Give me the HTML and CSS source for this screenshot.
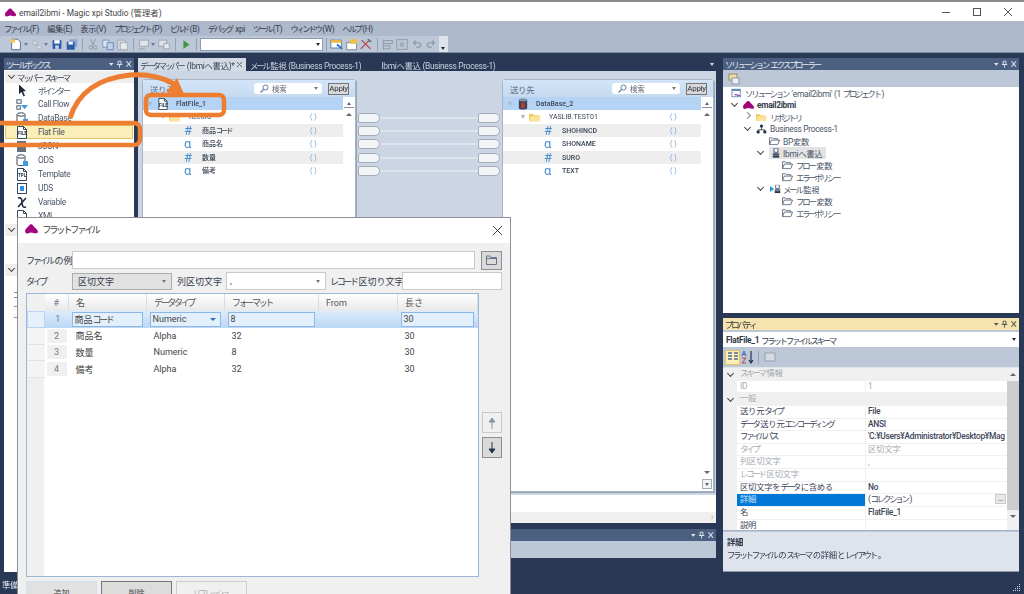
FILE: index.html
```html
<!DOCTYPE html>
<html lang="ja">

<head>
    <meta charset="UTF-8" />
    <title>email2ibmi - Magic xpi Studio</title>
    <link rel="stylesheet" href="styles.css">
</head>

<body>
    <svg class="defs" width="0" height="0">
        <symbol id="logo" viewBox="0 0 14 11">
            <path d="M0 8C0 5 3 4 4.500 1.500C6 -.5 8 .3 9 2C10 4 13 5 14 8C14.500 10.500 11 10.500 8 9.500C5 9 3 11 1.500 10.500C.5 10 0 9 0 8Z" fill="#a3057f" />
        </symbol>
        <symbol id="folder" viewBox="0 0 12 10">
            <path d="M.5 9V1.500H4L5 2.500H9.500V4M.5 9L2.500 4H11.500L9.500 9Z" fill="#fff" stroke="#5d6b7d" />
        </symbol>
        <symbol id="yfolder" viewBox="0 0 14 10">
            <path d="M0 1.500H5L6 3H12V10H0Z" fill="#f0c860" />
            <path d="M2 4H14L12 10H0Z" fill="#fbe39a" />
        </symbol>
        <symbol id="file" viewBox="0 0 12 13">
            <path d="M1.500 .5H7.500L10.500 3.500V12.500H1.500Z" fill="#fff" stroke="#33465e" />
            <path d="M7.500 .5V3.500H10.500" fill="none" stroke="#33465e" />
        </symbol>
        <symbol id="db" viewBox="0 0 12 13">
            <path d="M1 2.500V10.500C1 12 9 12 9 10.500V2.500Z" fill="#fff" stroke="#3c4b5f" />
            <ellipse cx="5" cy="2.500" rx="4" ry="1.700" fill="#fff" stroke="#3c4b5f" />
            <rect x="7" y="7" width="5" height="5" fill="#3d9be0" />
        </symbol>
        <symbol id="target-db" viewBox="0 0 12 13">
            <path d="M1.500 2V11C1.500 13 10.500 13 10.500 11V2Z" fill="#38455a" />
            <ellipse cx="6" cy="2" rx="4.500" ry="1.700" fill="#8793a6" />
            <path d="M4 5H8V11H4Z" fill="#c0392f" />
        </symbol>
        <symbol id="person" viewBox="0 0 10 12">
            <rect x="2.500" y="0" width="5" height="5" fill="#fff" stroke="#26354d" />
            <rect x="1" y="6.500" width="8" height="1.800" fill="#26354d" />
            <rect x="1" y="9" width="8" height="3" fill="#26354d" />
        </symbol>
        <symbol id="pane-btns" viewBox="0 0 26 8">
            <path d="M1 3H6L3.500 6Z" fill="currentColor" />
            <path d="M11 1H14V4.500H11ZM9.500 4.500H15.500M12.500 4.500V8" fill="none" stroke="currentColor" />
            <path d="M20 1L25 7M25 1L20 7" fill="none" stroke="currentColor" stroke-width="1.200" />
        </symbol>
        <symbol id="magnifier" viewBox="0 0 9 9">
            <circle cx="5.500" cy="3.500" r="2.500" fill="none" stroke="#5f7ea8" />
            <path d="M3.500 5.500L.5 8.500" stroke="#5f7ea8" stroke-width="1.300" />
        </symbol>
        <symbol id="to-top" viewBox="0 0 10 8">
            <path d="M0 7.500H10" stroke="#8b95a3" />
            <path d="M3 5L5 2L7 5Z" fill="#5d6672" />
        </symbol>
        <symbol id="to-bottom" viewBox="0 0 10 10">
            <rect x=".5" y=".5" width="9" height="9" fill="#f3f4f6" stroke="#a3adba" />
            <path d="M3 4H7L5 7Z" fill="#5d6672" />
        </symbol>
    </svg>

    <div class="window">
        <header class="titlebar">
            <svg class="logo"><use href="#logo" /></svg>
            <span class="titlebar-text">email2ibmi - Magic xpi Studio (管理者)</span>
            <div class="window-btns">
                <svg width="10" height="10" viewBox="0 0 10 10"><path d="M1 5.500H9" stroke="#555" /></svg>
                <svg width="10" height="10" viewBox="0 0 10 10"><rect x="1.500" y="1.500" width="7" height="7" fill="none" stroke="#555" /></svg>
                <svg width="10" height="10" viewBox="0 0 10 10"><path d="M1 1L9 9M9 1L1 9" stroke="#555" /></svg>
            </div>
        </header>

        <nav class="menubar">
            <span><span class="k">ファイル</span>(F)</span>
            <span>編集(E)</span>
            <span>表示(V)</span>
            <span><span class="k">プロジェクト</span>(P)</span>
            <span><span class="k">ビルド</span>(B)</span>
            <span><span class="k">デバッグ</span> xpi</span>
            <span><span class="k">ツール</span>(T)</span>
            <span><span class="k">ウィンドウ</span>(W)</span>
            <span><span class="k">ヘルプ</span>(H)</span>
        </nav>

        <div class="toolbar-row">
            <div class="toolbar">
                <svg class="tool" viewBox="0 0 16 14"><path d="M3 1H10L13 4V13H3Z" fill="#fff" stroke="#41628c" /><rect x="1" y="1" width="6" height="4" fill="#f0c860" /></svg>
                <i class="caret"></i>
                <svg class="tool" viewBox="0 0 16 14"><path d="M3 3H8V7H3ZM8 8H13V12H8Z" fill="#d5dae2" stroke="#a9b2be" /></svg>
                <i class="caret"></i>
                <svg class="tool" viewBox="0 0 16 14"><rect x="3" y="2" width="10" height="10" fill="#2a5ba8" /><rect x="5" y="2" width="6" height="4" fill="#fff" /><rect x="6" y="8" width="4" height="4" fill="#cbd7ea" /></svg>
                <svg class="tool" viewBox="0 0 16 14"><rect x="5" y="1" width="9" height="9" fill="#8aa5d3" /><rect x="2" y="4" width="9" height="9" fill="#2a5ba8" /><rect x="4" y="4" width="5" height="3" fill="#fff" /></svg>
                <b class="sep"></b>
                <svg class="tool" viewBox="0 0 16 14"><path d="M5 1L9 8M11 1L7 8" stroke="#8d949e" fill="none" /><circle cx="5.500" cy="10.500" r="2" fill="none" stroke="#8d949e" /><circle cx="10.500" cy="10.500" r="2" fill="none" stroke="#8d949e" /></svg>
                <svg class="tool" viewBox="0 0 16 14"><rect x="2" y="2" width="7" height="8" fill="#dbe4f2" stroke="#7b91b3" /><rect x="7" y="5" width="7" height="8" fill="#bed0ea" stroke="#6584b3" /></svg>
                <svg class="tool" viewBox="0 0 16 14"><rect x="3" y="2" width="9" height="11" fill="#d5d9df" stroke="#a0a7b1" /><rect x="6" y="5" width="8" height="8" fill="#e8eaee" stroke="#a0a7b1" /></svg>
                <b class="sep"></b>
                <svg class="tool" viewBox="0 0 16 14"><rect x="3" y="2" width="10" height="7" fill="#dfe3e9" stroke="#9aa2ae" /><path d="M2 12H9" stroke="#9aa2ae" /></svg>
                <i class="caret"></i>
                <svg class="tool" viewBox="0 0 16 14"><rect x="2" y="2" width="9" height="7" fill="#dfe3e9" stroke="#9aa2ae" /><rect x="8" y="6" width="6" height="6" fill="#e9ebef" stroke="#9aa2ae" /></svg>
                <b class="sep"></b>
                <svg class="tool" viewBox="0 0 16 14"><path d="M5 2L12 7L5 12Z" fill="#3e9a3e" /></svg>
                <b class="sep"></b>
                <div class="tool-combo"><i class="caret dark"></i></div>
                <b class="sep"></b>
                <svg class="tool" viewBox="0 0 16 14"><rect x="1" y="2" width="12" height="9" fill="#fff" stroke="#4f77ab" /><rect x="1" y="2" width="12" height="3" fill="#f0b840" /><path d="M8 7L14 12" stroke="#2f6fc0" stroke-width="2" /></svg>
                <svg class="tool" viewBox="0 0 16 14"><rect x="2" y="5" width="11" height="8" fill="#fff" stroke="#7b7f87" /><rect x="6" y="1" width="8" height="5" fill="#f0c040" /></svg>
                <svg class="tool" viewBox="0 0 16 14"><path d="M2 12L12 2M3 2L13 12" stroke="#b9474a" stroke-width="1.500" /><path d="M10 1L14 4" stroke="#6d7685" stroke-width="2" /></svg>
                <b class="sep"></b>
                <svg class="tool" viewBox="0 0 16 14"><path d="M2.500 1V13M2.500 2.500H13V6H2.500M2.500 8.500H10V12H2.500" fill="none" stroke="#8a95a5" /></svg>
                <svg class="tool" viewBox="0 0 16 14"><rect x="2" y="1.500" width="12" height="11" fill="none" stroke="#8a95a5" /><circle cx="8" cy="7" r="3" fill="#a3adba" /></svg>
                <svg class="tool" viewBox="0 0 16 14"><path d="M4 5H10C13 5 13 10 10 10H7M4 5L6.500 2.500M4 5L6.500 7.500" fill="none" stroke="#8a95a5" stroke-width="1.300" /></svg>
                <svg class="tool" viewBox="0 0 16 14"><path d="M12 5H6C3 5 3 10 6 10H9M12 5L9.500 2.500M12 5L9.500 7.500" fill="none" stroke="#8a95a5" stroke-width="1.300" /></svg>
                <div class="overflow-btn"><i class="caret dark"></i></div>
            </div>
        </div>

        <main class="workspace">
            <section class="toolwindow toolbox">
                <div class="tw-head"><span class="k">ツールボックス</span><svg class="tw-btns"><use href="#pane-btns" /></svg></div>
                <div class="toolbox-group"><i class="chev"></i><span class="k">マッパー スキーマ</span></div>
                <ul class="toolbox-list">
                    <li><svg viewBox="0 0 12 13"><path d="M3 .5L3 10L5.500 8L7.500 12.500L9 11.500L7 7.500L10 7Z" fill="#1e2a3a" /></svg><span class="k">ポインター</span></li>
                    <li><svg viewBox="0 0 14 13"><rect x="1" y="1" width="5" height="4" fill="#fff" stroke="#33465e" /><rect x="1" y="8" width="4" height="4" fill="#fff" stroke="#33465e" /><path d="M6 7H14L10 12Z" fill="#3d9be0" /></svg>Call Flow</li>
                    <li><svg><use href="#db" /></svg>DataBase</li>
                    <li class="active"><svg><use href="#file" /></svg><em class="file-tag">FILE</em>Flat File</li>
                    <li><svg viewBox="0 0 12 13"><rect x="1" y="1" width="9" height="11" fill="#666f7c" /></svg>JSON</li>
                    <li><svg><use href="#db" /></svg>ODS</li>
                    <li><svg><use href="#file" /></svg><em class="file-tag">TPL</em>Template</li>
                    <li><svg viewBox="0 0 12 13"><rect x="1.500" y="1.500" width="9" height="10" fill="#fff" stroke="#33465e" /><rect x="4" y="4" width="4" height="5" fill="#2f8fe0" /></svg>UDS</li>
                    <li><svg viewBox="0 0 12 13"><path d="M2 2C5 1 6 3 6 6C6 10 7 12 10 11M10 2L2 11" fill="none" stroke="#1e2a3a" stroke-width="1.500" /></svg>Variable</li>
                    <li><svg><use href="#file" /></svg>XML</li>
                </ul>
                <div class="toolbox-group"><i class="chev"></i></div>
                <div class="toolbox-gap"></div>
                <div class="toolbox-group"><i class="chev"></i></div>
                <div class="toolbox-stub">コ<br>−<br>−</div>
            </section>

            <div class="center">
                <div class="tabstrip">
                    <div class="tab active"><span><span class="k">データマッパー</span> (Ibmiへ書込)*</span><svg class="tab-close" width="7" height="7" viewBox="0 0 7 7"><path d="M1 1L6 6M6 1L1 6" stroke="#566" /></svg></div>
                    <div class="tab"><span class="k">メール</span>監視 (Business Process-1)</div>
                    <div class="tab">Ibmiへ書込 (Business Process-1)</div>
                    <i class="caret light"></i>
                </div>
                <div class="mapper">
                    <div class="schema">
                        <div class="schema-head">
                            <span>送り元</span>
                            <div class="search"><svg width="9" height="9"><use href="#magnifier" /></svg>検索<i class="caret gray"></i></div>
                            <div class="apply">Apply</div>
                        </div>
                        <div class="schema-body">
                            <div class="rows">
                                <div class="row selected"><i class="tri"></i><svg class="lv0"><use href="#file" /></svg><em class="file-tag">FILE</em><span class="name">FlatFile_1</span></div>
                                <div class="row"><i class="tri sub"></i><svg class="lv1"><use href="#yfolder" /></svg><span class="name">Record</span><span class="count">( )</span></div>
                                <div class="row odd"><span class="type">#</span><span class="name">商品<span class="k">コード</span></span><span class="count">( )</span></div>
                                <div class="row"><span class="type">α</span><span class="name">商品名</span><span class="count">( )</span></div>
                                <div class="row odd"><span class="type">#</span><span class="name">数量</span><span class="count">( )</span></div>
                                <div class="row"><span class="type">α</span><span class="name">備考</span><span class="count">( )</span></div>
                            </div>
                            <div class="schema-scroll"><svg width="10" height="8"><use href="#to-top" /></svg><i class="up"></i><i class="down"></i><svg width="10" height="10"><use href="#to-bottom" /></svg></div>
                        </div>
                    </div>
                    <div class="links">
                        <div class="link"><i class="pill"></i><b></b><i class="pill"></i></div>
                        <div class="link"><i class="pill"></i><b></b><i class="pill"></i></div>
                        <div class="link"><i class="pill"></i><b></b><i class="pill"></i></div>
                        <div class="link"><i class="pill"></i><b></b><i class="pill"></i></div>
                        <div class="link"><i class="pill"></i><b></b><i class="pill"></i></div>
                    </div>
                    <div class="schema">
                        <div class="schema-head">
                            <span>送り先</span>
                            <div class="search"><svg width="9" height="9"><use href="#magnifier" /></svg>検索<i class="caret gray"></i></div>
                            <div class="apply">Apply</div>
                        </div>
                        <div class="schema-body">
                            <div class="rows">
                                <div class="row selected"><i class="tri"></i><svg class="lv0"><use href="#target-db" /></svg><span class="name">DataBase_2</span></div>
                                <div class="row"><i class="tri sub"></i><svg class="lv1"><use href="#yfolder" /></svg><span class="name">YASLIB.TEST01</span><span class="count">( )</span></div>
                                <div class="row odd"><span class="type">#</span><span class="name">SHOHINCD</span><span class="count">( )</span></div>
                                <div class="row"><span class="type">α</span><span class="name">SHONAME</span><span class="count">( )</span></div>
                                <div class="row odd"><span class="type">#</span><span class="name">SURO</span><span class="count">( )</span></div>
                                <div class="row"><span class="type">α</span><span class="name">TEXT</span><span class="count">( )</span></div>
                            </div>
                            <div class="schema-scroll"><svg width="10" height="8"><use href="#to-top" /></svg><i class="up"></i><i class="down"></i><svg width="10" height="10"><use href="#to-bottom" /></svg></div>
                        </div>
                    </div>
                </div>
                <div class="center-white"></div>
                <div class="center-hscroll">›</div>
                <div class="output-panel">
                    <div class="tw-head"><span></span><svg class="tw-btns"><use href="#pane-btns" /></svg></div>
                    <div class="output-bar"></div>
                </div>
            </div>

            <div class="right">
                <section class="toolwindow explorer">
                    <div class="tw-head"><span class="k">ソリューション エクスプローラー</span><svg class="tw-btns"><use href="#pane-btns" /></svg></div>
                    <div class="explorer-bar"><svg width="12" height="12" viewBox="0 0 12 12"><rect x="1" y="1" width="8" height="6" fill="#f3dc9c" stroke="#9a8d68" /><rect x="4" y="5" width="7" height="6" fill="#eef1f6" stroke="#8a95a5" /></svg></div>
                    <ul class="tree">
                        <li class="lv-a"><svg viewBox="0 0 12 12"><rect x=".5" y="1.500" width="10" height="9" fill="#fff" stroke="#5a7fb0" /><rect x=".5" y="1.500" width="10" height="2" fill="#5a7fb0" /><path d="M4 8.500C6 6 8 11 10 8.500" fill="none" stroke="#7a3fb0" stroke-width="1.500" /></svg><span><span class="k">ソリューション</span> 'email2ibmi' (1 <span class="k">プロジェクト</span>)</span></li>
                        <li class="lv-b bold"><i class="chev"></i><svg viewBox="0 0 14 11"><use href="#logo" /></svg>email2ibmi</li>
                        <li class="lv-c"><i class="chev closed"></i><svg viewBox="0 0 14 10"><use href="#yfolder" /></svg><span class="k">リポジトリ</span></li>
                        <li class="lv-c"><i class="chev"></i><svg viewBox="0 0 12 12"><circle cx="6" cy="2.500" r="2" fill="#26354d" /><circle cx="2" cy="9.500" r="2" fill="#26354d" /><circle cx="10" cy="9.500" r="2" fill="#26354d" /><path d="M6 3V7M2 9V7H10V9" fill="none" stroke="#26354d" /></svg>Business Process-1</li>
                        <li class="lv-d"><svg viewBox="0 0 12 10"><use href="#folder" /></svg>BP変数</li>
                        <li class="lv-c2"><i class="chev"></i><span class="current"><svg viewBox="0 0 10 12"><use href="#person" /></svg>Ibmiへ書込</span></li>
                        <li class="lv-e"><svg viewBox="0 0 12 10"><use href="#folder" /></svg><span><span class="k">フロー</span>変数</span></li>
                        <li class="lv-e"><svg viewBox="0 0 12 10"><use href="#folder" /></svg><span class="k">エラーポリシー</span></li>
                        <li class="lv-c2"><i class="chev"></i><span class="mail"><i class="play"></i><svg viewBox="0 0 10 12"><use href="#person" /></svg><span><span class="k">メール</span>監視</span></span></li>
                        <li class="lv-e"><svg viewBox="0 0 12 10"><use href="#folder" /></svg><span><span class="k">フロー</span>変数</span></li>
                        <li class="lv-e"><svg viewBox="0 0 12 10"><use href="#folder" /></svg><span class="k">エラーポリシー</span></li>
                    </ul>
                </section>

                <section class="toolwindow props">
                    <div class="tw-head focus"><span class="k">プロパティ</span><svg class="tw-btns"><use href="#pane-btns" /></svg></div>
                    <div class="props-combo"><b>FlatFile_1</b>&nbsp;<span class="k">フラットファイルスキーマ</span><i class="caret dark"></i></div>
                    <div class="props-bar">
                        <span class="props-btn on"><svg width="12" height="12" viewBox="0 0 12 12"><path d="M1 2H5M1 5H5M1 8H5M7 2H11M7 5H11M7 8H11" stroke="#516c96" stroke-width="1.500" /></svg></span>
                        <span class="props-btn"><svg width="14" height="14" viewBox="0 0 14 14"><path d="M1 6L3 1L5 6M1.500 4.500H4.500" fill="none" stroke="#3f6fb5" /><path d="M1 8H5L1 13H5" fill="none" stroke="#b9474a" /><path d="M10 1V12M8 10L10 13L12 10" fill="none" stroke="#26354d" stroke-width="1.200" /></svg></span>
                        <b class="sep"></b>
                        <span class="props-btn"><svg width="12" height="12" viewBox="0 0 12 12"><rect x="1" y="2" width="10" height="8" fill="#d5dae2" stroke="#98a2b0" /></svg></span>
                    </div>
                    <div class="props-grid">
                        <div class="props-table">
                            <div class="p-row cat"><i class="chev"></i><span class="p-name"><span class="k">スキーマ</span>情報</span></div>
                            <div class="p-row dim"><span class="p-name">ID</span><span class="p-val">1</span></div>
                            <div class="p-row cat"><i class="chev"></i><span class="p-name">一般</span></div>
                            <div class="p-row"><span class="p-name">送り元<span class="k">タイプ</span></span><span class="p-val strong">File</span></div>
                            <div class="p-row"><span class="p-name"><span class="k">データ</span>送り元<span class="k">エンコーディング</span></span><span class="p-val strong">ANSI</span></div>
                            <div class="p-row"><span class="p-name"><span class="k">ファイルパス</span></span><span class="p-val strong">'C:¥Users¥Administrator¥Desktop¥Mag</span></div>
                            <div class="p-row dim"><span class="p-name"><span class="k">タイプ</span></span><span class="p-val">区切文字</span></div>
                            <div class="p-row dim"><span class="p-name">列区切文字</span><span class="p-val">,</span></div>
                            <div class="p-row dim"><span class="p-name"><span class="k">レコード</span>区切文字</span><span class="p-val"></span></div>
                            <div class="p-row"><span class="p-name">区切文字を<span class="k">データ</span>に含める</span><span class="p-val strong">No</span></div>
                            <div class="p-row picked"><span class="p-name">詳細</span><span class="p-val"><span>(<span class="k">コレクション</span>)</span><i class="dots">...</i></span></div>
                            <div class="p-row"><span class="p-name">名</span><span class="p-val strong">FlatFile_1</span></div>
                            <div class="p-row"><span class="p-name">説明</span><span class="p-val"></span></div>
                        </div>
                        <div class="props-scroll"><i class="up"></i><div class="props-thumb"></div><i class="down"></i></div>
                    </div>
                    <div class="props-desc"><b>詳細</b><span><span class="k">フラットファイル</span>の<span class="k">スキーマ</span>の詳細と<span class="k">レイアウト</span>。</span></div>
                </section>
            </div>
        </main>

        <footer class="statusbar">
            <span>準備</span>
            <svg class="grip" width="9" height="9" viewBox="0 0 9 9"><path d="M7 1h1v1H7zM5 3h1v1H5zM7 3h1v1H7zM3 5h1v1H3zM5 5h1v1H5zM7 5h1v1H7zM1 7h1v1H1zM3 7h1v1H3zM5 7h1v1H5zM7 7h1v1H7z" fill="#cfd6e2" /></svg>
        </footer>
    </div>

    <div class="dialog">
        <div class="dlg-title">
            <svg class="dlg-logo"><use href="#logo" /></svg>
            <span class="k">フラットファイル</span>
            <svg class="dlg-close" width="11" height="11" viewBox="0 0 11 11"><path d="M1 1L10 10M10 1L1 10" stroke="#444" /></svg>
        </div>
        <div class="dlg-body">
            <div class="field-row">
                <label class="file-label"><span class="k">ファイル</span>の例</label>
                <div class="input grow"></div>
                <div class="folder-btn"><svg width="11" height="10" viewBox="0 0 11 10"><path d="M.5 9.500V1H4L5 2.500H10.500V9.500Z" fill="none" stroke="#66758a" /><path d="M.5 3.500H10.500" stroke="#66758a" /></svg></div>
            </div>
            <div class="field-row">
                <label class="file-label"><span class="k">タイプ</span></label>
                <div class="select">区切文字<i class="caret gray"></i></div>
                <label class="sep-label">列区切文字</label>
                <div class="input col-sep">,<i class="caret gray"></i></div>
                <label class="rec-label"><span class="k">レコード</span>区切り文字</label>
                <div class="input rec-sep"></div>
            </div>
            <div class="grid-row">
                <div class="table-wrap">
                    <table class="fields">
                        <colgroup>
                            <col class="c-gutter"><col class="c-no"><col class="c-name"><col class="c-type"><col class="c-format"><col class="c-from"><col class="c-len">
                        </colgroup>
                        <thead>
                            <tr><th class="corner"></th><th class="no">#</th><th>名</th><th><span class="k">データタイプ</span></th><th><span class="k">フォーマット</span></th><th>From</th><th>長さ</th></tr>
                        </thead>
                        <tbody>
                            <tr class="current-row">
                                <td class="gutter"></td><td class="no">1</td>
                                <td><span class="edit"><span>商品<span class="k">コード</span></span></span></td>
                                <td><span class="edit">Numeric<i class="blue-caret"></i></span></td>
                                <td><span class="edit">8</span></td>
                                <td></td>
                                <td><span class="edit">30</span></td>
                            </tr>
                            <tr><td class="gutter"></td><td class="no"><span>2</span></td><td>商品名</td><td>Alpha</td><td>32</td><td></td><td>30</td></tr>
                            <tr><td class="gutter"></td><td class="no"><span>3</span></td><td>数量</td><td>Numeric</td><td>8</td><td></td><td>30</td></tr>
                            <tr><td class="gutter"></td><td class="no"><span>4</span></td><td>備考</td><td>Alpha</td><td>32</td><td></td><td>30</td></tr>
                        </tbody>
                    </table>
                </div>
                <div class="move-btns">
                    <div class="move off"><svg width="12" height="14" viewBox="0 0 12 14"><path d="M6 13V3M3 6L6 2L9 6Z" fill="#8a95a5" stroke="#8a95a5" /></svg></div>
                    <div class="move"><svg width="12" height="14" viewBox="0 0 12 14"><path d="M6 1V11M3 8L6 12L9 8Z" fill="#26354d" stroke="#26354d" /></svg></div>
                </div>
            </div>
            <div class="dlg-buttons">
                <button class="btn primary">追加</button>
                <button class="btn pressed">削除</button>
                <button class="btn off"><span class="k">リフレッシュ</span></button>
            </div>
        </div>
    </div>

    <svg class="callout" width="240" height="160" viewBox="0 0 240 160">
        <rect x="-6" y="123" width="146" height="22" rx="6" fill="none" stroke="#ed7d31" stroke-width="4.500" />
        <rect x="146" y="95" width="78" height="20" rx="5" fill="none" stroke="#ed7d31" stroke-width="4.500" />
        <path d="M70 118C78 92 100 78 130 75C148 74 162 77 174 84" fill="none" stroke="#ed7d31" stroke-width="5" />
        <path d="M177 78L184 94L166 92Z" fill="#ed7d31" />
    </svg>
</body>

</html>
```

FILE: styles.css
```css
* {
    box-sizing: border-box;
}

html,
body {
    margin: 0;
    width: 1024px;
    height: 594px;
    overflow: hidden;
}

body {
    position: relative;
    background: #293955;
    font-family: Roboto, "Noto Sans CJK JP", sans-serif;
    font-size: 8.400px;
    letter-spacing: -0.3px;
    color: #333c4c;
    filter: blur(0.45px);
}

ul {
    list-style: none;
    margin: 0;
    padding: 0;
}

.defs {
    position: absolute;
}

/* カナは幅の狭いフォントに見せる */
.k {
    letter-spacing: -0.26em;
    word-spacing: 0.3em;
    padding-right: 0.2em;
}

.window {
    display: flex;
    flex-direction: column;
    height: 594px;
}

.titlebar {
    display: flex;
    align-items: center;
    flex: none;
    height: 21px;
    padding: 1px 0 0 5px;
    background: #fff;
    border-top: 2px solid #8a8d92;
    font-size: 8.400px;
    letter-spacing: 0;
    color: #444;
}

.logo {
    width: 11px;
    height: 9px;
    margin-right: 3px;
}

.titlebar-text {
    flex: 1;
}

.window-btns {
    display: flex;
    gap: 21px;
    padding-right: 11px;
}

.menubar {
    display: flex;
    align-items: center;
    flex: none;
    gap: 8px;
    height: 14px;
    padding: 0 0 1px 4px;
    background: #aeb9cc;
    font-size: 8.200px;
}

.toolbar-row {
    flex: none;
    height: 18px;
    padding-top: 1px;
    background: #aeb9cc;
    border-bottom: 1px solid #7a8aa3;
}

.toolbar {
    display: inline-flex;
    align-items: center;
    width: 446px;
    height: 16px;
    padding-left: 9px;
    background: #bcc7d8;
    border-radius: 2px;
}

.tool {
    flex: none;
    width: 14px;
    height: 13px;
    margin-right: 0.5px;
}

.caret {
    display: inline-block;
    flex: none;
    width: 0;
    height: 0;
    margin: 0 2px 0 0;
    border: 2px solid transparent;
    border-top: 3px solid #6b7a92;
    border-bottom: 0;
}

.caret.dark {
    border-top-color: #1e2a3a;
}

.caret.gray {
    border-top-color: #777;
}

.caret.light {
    border-top-color: #d9e0eb;
}

.sep {
    display: inline-block;
    flex: none;
    width: 1px;
    height: 13px;
    margin: 0 3px;
    background: #93a1b6;
}

.tool-combo {
    display: flex;
    align-items: center;
    justify-content: flex-end;
    flex: none;
    width: 123px;
    height: 13px;
    background: #fff;
    border: 1px solid #8d9cb2;
}

.overflow-btn {
    display: flex;
    align-items: flex-end;
    justify-content: center;
    flex: none;
    width: 9px;
    height: 16px;
    padding-bottom: 2px;
    background: #dfe4ec;
}

.overflow-btn .caret {
    margin: 0;
}

.workspace {
    flex: 1;
    display: flex;
    padding: 5px 4px 0;
    min-height: 0;
}

.toolwindow {
    display: flex;
    flex-direction: column;
}

.tw-head {
    display: flex;
    justify-content: space-between;
    align-items: center;
    flex: none;
    height: 12px;
    padding: 0 2px 0 2px;
    background: #4b5f80;
    color: #e4e9f1;
    white-space: nowrap;
}

.tw-btns {
    width: 24px;
    height: 8px;
    color: #dfe5ee;
}

.tw-head.focus {
    background: #f5e4ae;
    color: #333;
}

.tw-head.focus .tw-btns {
    color: #555;
}

.toolbox {
    width: 130px;
    height: 514px;
    background: #fff;
}

.chev {
    display: inline-block;
    flex: none;
    width: 10px;
    height: 8px;
    position: relative;
}

.chev::before {
    content: "";
    position: absolute;
    left: 2px;
    top: 0;
    width: 4px;
    height: 4px;
    border-right: 1px solid #444;
    border-bottom: 1px solid #444;
    transform: rotate(45deg);
}

.chev.closed::before {
    transform: rotate(-45deg);
    border-color: #888;
}

.toolbox-group {
    display: flex;
    align-items: center;
    flex: none;
    height: 12px;
    margin: 1px 0 0 1px;
    padding-left: 2px;
    background: #eee;
}

.toolbox-list li {
    display: flex;
    align-items: center;
    position: relative;
    height: 14px;
    padding-left: 34px;
    color: #4b5668;
}

.toolbox-list li svg {
    position: absolute;
    left: 12px;
    top: 1px;
    width: 12px;
    height: 13px;
}

.toolbox-list .active {
    margin: 0 1px;
    padding-left: 33px;
    background: #fbeeb8;
    box-shadow: inset 0 0 0 1px #e5c365;
}

.toolbox-list .active svg {
    left: 11px;
}

.file-tag {
    position: absolute;
    left: 14px;
    top: 6px;
    font-size: 4.500px;
    font-style: normal;
    font-weight: 700;
    letter-spacing: 0;
    color: #26354d;
}

.toolbox-list .active .file-tag {
    left: 13px;
}

.toolbox-gap {
    height: 27px;
    flex: none;
}

.toolbox-stub {
    margin: 14px 0 0 9px;
    line-height: 11px;
    color: #555;
}

.center {
    display: flex;
    flex-direction: column;
    width: 578px;
    margin-left: 4px;
}

.tabstrip {
    display: flex;
    align-items: center;
    height: 13px;
    flex: none;
    color: #c7d0df;
}

.tab {
    padding: 0 0 0 2px;
    white-space: nowrap;
}

.tab.active {
    display: flex;
    align-items: center;
    justify-content: space-between;
    width: 108px;
    height: 13px;
    margin-right: 2px;
    padding-right: 3px;
    background: #d3dae6;
    color: #3c4658;
}

.tabstrip .tab:nth-child(3) {
    margin-left: 18px;
}

.tabstrip .caret {
    margin: 0 2px 0 auto;
}

.mapper {
    display: flex;
    align-items: stretch;
    flex: none;
    height: 424px;
    padding: 8px 2px 3px 4px;
    background: #ccd5e3;
}

.schema {
    display: flex;
    flex-direction: column;
    width: 214px;
    background: #fff;
    border: 1px solid #a6b4c8;
    border-radius: 3px 3px 0 0;
    box-shadow: 1px 1px 0 #9ba3ae;
}

.schema:last-child {
    width: 212px;
}

.schema-head {
    display: flex;
    align-items: center;
    flex: none;
    height: 17px;
    padding: 0 6px 0 7px;
    background: linear-gradient(#d3e5f8, #c5d9f0);
    color: #5b6a80;
}

.schema-head > span {
    flex: 1;
}

.search {
    display: flex;
    align-items: center;
    gap: 3px;
    width: 68px;
    height: 11px;
    margin-right: 6px;
    padding: 0 2px 0 6px;
    background: #fff;
    border-radius: 3px;
    color: #667;
    font-size: 7.500px;
}

.search .caret {
    margin-left: auto;
}

.apply {
    width: 21px;
    height: 12px;
    line-height: 10px;
    text-align: center;
    background: #d6d8dc;
    border: 1px solid #777;
    color: #333;
    font-size: 8px;
}

.schema-body {
    display: flex;
    flex: 1;
}

.rows {
    flex: 1;
}

.schema-scroll {
    display: flex;
    flex-direction: column;
    align-items: center;
    width: 12px;
    padding: 3px 0 2px;
}

.schema-scroll .down {
    margin-top: auto;
}

.row {
    position: relative;
    height: 13.400px;
    line-height: 14px;
    font-size: 7px;
    font-weight: 500;
    letter-spacing: 0;
    color: #3c4658;
}

.row.selected {
    background: #b5d4f5;
}

.row.odd {
    background: #eee;
}

.row svg {
    position: absolute;
    height: 12px;
    width: 12px;
    top: 1px;
}

.row .lv0 {
    left: 14px;
}

.row .lv1 {
    left: 26px;
}

.tri {
    position: absolute;
    left: 5px;
    top: 5px;
    width: 0;
    height: 0;
    border: 2.500px solid transparent;
    border-top: 4px solid #a9b4c4;
    border-bottom: 0;
}

.tri.sub {
    left: 18px;
}

.row .file-tag {
    left: 16px;
    top: 6px;
    line-height: 6px;
}

.row .name {
    position: absolute;
    left: 59px;
    white-space: nowrap;
}

.row.selected .name {
    left: 33px;
}

.row .lv1 + .name {
    left: 46px;
    font-weight: 400;
}

.row .type {
    position: absolute;
    left: 41px;
    font-size: 13px;
    font-weight: 400;
    color: #4a8fd0;
    line-height: 13px;
}

.row .count {
    position: absolute;
    left: 167px;
    color: #6c9bd0;
    font-weight: 400;
}

.links {
    display: flex;
    flex-direction: column;
    flex: 1;
    padding-top: 32px;
}

.link {
    display: flex;
    align-items: center;
    flex: none;
    height: 13.400px;
    padding: 0 2px;
}

.link b {
    flex: 1;
    height: 2px;
    background: #dfe4ec;
}

.pill {
    display: block;
    width: 22px;
    height: 10px;
    background: #f3f4f6;
    border: 1px solid #a3adba;
    border-radius: 2px 5px 5px 2px;
}

.center-white {
    height: 17px;
    flex: none;
    background: #fff;
}

.center-hscroll {
    height: 11px;
    flex: none;
    padding-right: 3px;
    line-height: 10px;
    text-align: right;
    background: #f0f0f0;
    color: #aaa;
}

.output-panel {
    margin-top: 6px;
    flex: none;
}

.output-bar {
    height: 17px;
    background: #bcc7d8;
}

.right {
    display: flex;
    flex-direction: column;
    width: 296px;
    margin-left: 7px;
}

.explorer {
    height: 255px;
    background: #fff;
}

.explorer-bar {
    flex: none;
    height: 17px;
    padding: 3px 0 0 5px;
    background: #bcc7d8;
}

.tree li {
    display: flex;
    align-items: center;
    height: 12px;
    color: #4b5668;
    white-space: nowrap;
}

.tree svg {
    flex: none;
    width: 11px;
    height: 10px;
    margin-right: 3px;
}

.tree .chev {
    width: 13px;
}

.tree .bold {
    font-weight: 700;
    color: #333c4c;
}

.lv-a {
    padding-left: 8px;
}

.lv-b {
    padding-left: 7px;
}

.lv-c {
    padding-left: 20px;
}

.lv-c2 {
    padding-left: 33px;
}

.lv-d {
    padding-left: 46px;
}

.lv-e {
    padding-left: 59px;
}

.current {
    display: flex;
    align-items: center;
    height: 12px;
    padding: 0 4px 0 3px;
    background: #e3e3e3;
}

.mail {
    display: flex;
    align-items: center;
    padding-left: 1px;
}

.tree .current svg {
    width: 8px;
}

.tree .mail svg {
    width: 7px;
    margin-right: 2px;
}

.play {
    flex: none;
    width: 0;
    height: 0;
    border: 3px solid transparent;
    border-left: 4px solid #1a9ae0;
    border-right: 0;
}

.props {
    height: 254px;
    margin-top: 5px;
    background: #bcc7d8;
}

.props-combo {
    display: flex;
    align-items: center;
    flex: none;
    height: 15px;
    margin-top: 2px;
    padding-left: 3px;
    background: #fff;
}

.props-combo .caret {
    margin: 0 3px 0 auto;
}

.props-bar {
    display: flex;
    align-items: center;
    flex: none;
    height: 20px;
    padding-left: 2px;
    background: #bcc7d8;
}

.props-btn {
    display: flex;
    align-items: center;
    justify-content: center;
    width: 15px;
    height: 15px;
}

.props-btn.on {
    background: #fbeeb8;
    border: 1px solid #e5c365;
}

.props-grid {
    display: flex;
    flex: none;
    height: 164px;
    overflow: hidden;
    background: #fff;
    border-top: 1px solid #e2e5ea;
    border-bottom: 1px solid #a8b2c2;
}

.props-table {
    width: 284px;
    flex: none;
}

.p-row {
    display: flex;
    align-items: center;
    position: relative;
    height: 12.650px;
    padding-left: 14px;
    background: #fff;
    border-bottom: 1px solid #f0f0f0;
    color: #3c4658;
    white-space: nowrap;
    box-shadow: inset 14px 0 #f0f0f0;
}

.p-name {
    width: 129px;
    height: 100%;
    line-height: 11.500px;
    padding-left: 3px;
    flex: none;
    border-right: 1px solid #f0f0f0;
}

.p-val {
    flex: 1;
    min-width: 0;
    display: flex;
    justify-content: space-between;
    padding-left: 2px;
    overflow: hidden;
    line-height: 11.500px;
}

.strong {
    font-weight: 500;
}

.p-row.dim {
    color: #a4a9b1;
}

.p-row.cat {
    background: #f0f0f0;
    color: #a4a9b1;
}

.p-row.cat .chev {
    position: absolute;
    left: 3px;
    top: 3px;
}

.p-row.cat .p-name {
    border-right: 0;
}

.p-row.picked .p-name {
    background: #0078d7;
    color: #cfe3f7;
}

.dots {
    flex: none;
    width: 11px;
    height: 10px;
    margin-right: 1px;
    font-style: normal;
    line-height: 6px;
    text-align: center;
    background: #e8e8e8;
    border: 1px solid #ccc;
}

.props-scroll {
    display: flex;
    flex-direction: column;
    align-items: center;
    width: 12px;
    background: #f0f0f0;
}

.props-thumb {
    width: 100%;
    height: 129px;
    background: #cdcdcd;
}

.up,
.down {
    flex: none;
    width: 0;
    height: 0;
    margin: 5px 0;
    border: 3px solid transparent;
}

.up {
    border-bottom: 3px solid #666;
    border-top: 0;
}

.down {
    border-top: 3px solid #666;
    border-bottom: 0;
}

.props-desc {
    display: flex;
    flex-direction: column;
    gap: 1px;
    flex: none;
    height: 40px;
    margin-top: 1px;
    padding: 3px 4px;
    background: #dfe3ec;
    border-bottom: 1px solid #8b97a8;
}

.statusbar {
    display: flex;
    justify-content: space-between;
    align-items: center;
    flex: none;
    height: 21px;
    padding: 0 3px 0 2px;
    color: #e4e9f1;
}

.grip {
    align-self: flex-end;
    margin-bottom: 2px;
}

.dialog {
    position: absolute;
    left: 17px;
    top: 217px;
    width: 494px;
    height: 380px;
    background: #f0f0f0;
    border: 1px solid #8d8f94;
}

.dlg-title {
    display: flex;
    align-items: center;
    position: relative;
    height: 25px;
    padding: 0 0 3px 7px;
    background: #fff;
    font-size: 9.500px;
    color: #444;
}

.dlg-logo {
    width: 13px;
    height: 10px;
    margin-right: 4px;
}

.dlg-close {
    position: absolute;
    right: 7px;
    top: 7px;
}

.dlg-body {
    padding: 8px 8px 0;
    font-size: 9px;
    letter-spacing: 0;
}

.field-row {
    display: flex;
    align-items: center;
    height: 18px;
    margin-bottom: 3px;
    white-space: nowrap;
}

.file-label {
    width: 46px;
    flex: none;
}

.input {
    display: flex;
    align-items: center;
    justify-content: space-between;
    flex: none;
    height: 18px;
    padding: 0 3px;
    background: #fff;
    border: 1px solid #c9c9c9;
}

.grow {
    flex: 1;
    margin-right: 6px;
}

.folder-btn {
    display: flex;
    align-items: center;
    justify-content: center;
    flex: none;
    width: 21px;
    height: 19px;
    background: #dadada;
    border: 1px solid #8d8f94;
}

.select {
    display: flex;
    align-items: center;
    justify-content: space-between;
    flex: none;
    width: 100px;
    height: 17px;
    padding: 0 3px 0 5px;
    background: #e1e1e1;
    border: 1px solid #adadad;
}

.sep-label {
    width: 54px;
    padding-left: 5px;
    flex: none;
}

.col-sep {
    width: 100px;
}

.rec-label {
    width: 76px;
    padding-left: 4px;
    flex: none;
}

.rec-sep {
    width: 100px;
}

.grid-row {
    display: flex;
    gap: 3px;
}

.table-wrap {
    width: 453px;
    height: 284px;
    background: linear-gradient(90deg, #f0f0f0 17px, #fff 17px);
    border: 1px solid #9ab7d6;
}

.fields {
    width: 100%;
    border-collapse: collapse;
    table-layout: fixed;
}

.c-gutter {
    width: 17px;
}

.c-no {
    width: 24px;
}

.c-name {
    width: 78px;
}

.c-type {
    width: 78px;
}

.c-format {
    width: 94px;
}

.c-from {
    width: 79px;
}

.fields th {
    height: 17px;
    padding: 0 0 0 7px;
    font-weight: 400;
    text-align: left;
    color: #555;
    background: linear-gradient(#fff, #e8e8e8);
    border-right: 1px solid #d5dfeb;
}

.fields .corner {
    background: #f0f0f0;
    border-right: 0;
}

.fields td {
    height: 16.600px;
    padding: 0 0 0 7px;
    color: #444;
    white-space: nowrap;
}

.fields .no {
    text-align: center;
    padding: 0;
    color: #6d7c95;
}

.fields tbody .no {
    padding-left: 2px;
}

.fields tbody .no span {
    display: block;
    width: 20px;
    height: 14px;
    line-height: 14px;
    background: #f0f0f0;
}

.fields td.gutter {
    background: #f4f4f4;
    border-bottom: 1px solid #e3e3e3;
    padding: 0;
}

.current-row td {
    background: linear-gradient(#deecfb, #bcd7f5);
    padding: 0 1px 0 3px;
}

.current-row td.gutter {
    background: #e6f0fa;
    border: 1px solid #b8d6f4;
}

.edit {
    display: flex;
    align-items: center;
    justify-content: space-between;
    height: 15px;
    padding: 0 4px 0 2px;
    background: #e3f0fc;
    border: 1px solid #8cb8e6;
    margin-right: 3px;
}

.blue-caret {
    width: 0;
    height: 0;
    border: 3px solid transparent;
    border-top: 3px solid #2672b8;
    border-bottom: 0;
}

.move-btns {
    display: flex;
    flex-direction: column;
    gap: 4px;
    padding-top: 119px;
}

.move {
    display: flex;
    align-items: center;
    justify-content: center;
    width: 20px;
    height: 21px;
    background: #dadada;
    border: 1px solid #8d8f94;
}

.move.off {
    background: #f0f0f0;
    border-color: #c9c9c9;
}

.dlg-buttons {
    display: flex;
    gap: 4px;
    margin-top: 4px;
}

.btn {
    width: 71px;
    height: 22px;
    padding: 0;
    font-family: inherit;
    font-size: 8px;
    color: #444;
    background: #e1e1e1;
    border: 1px solid #adadad;
}

.btn.primary {
    border-color: #cfe0f2;
}

.btn.pressed {
    background: #dcdcdc;
    border-color: #777;
}

.btn.off {
    background: #f0f0f0;
    color: #aaa;
    border-color: #ccc;
}

.callout {
    position: absolute;
    left: 0;
    top: 0;
    overflow: visible;
}
```
